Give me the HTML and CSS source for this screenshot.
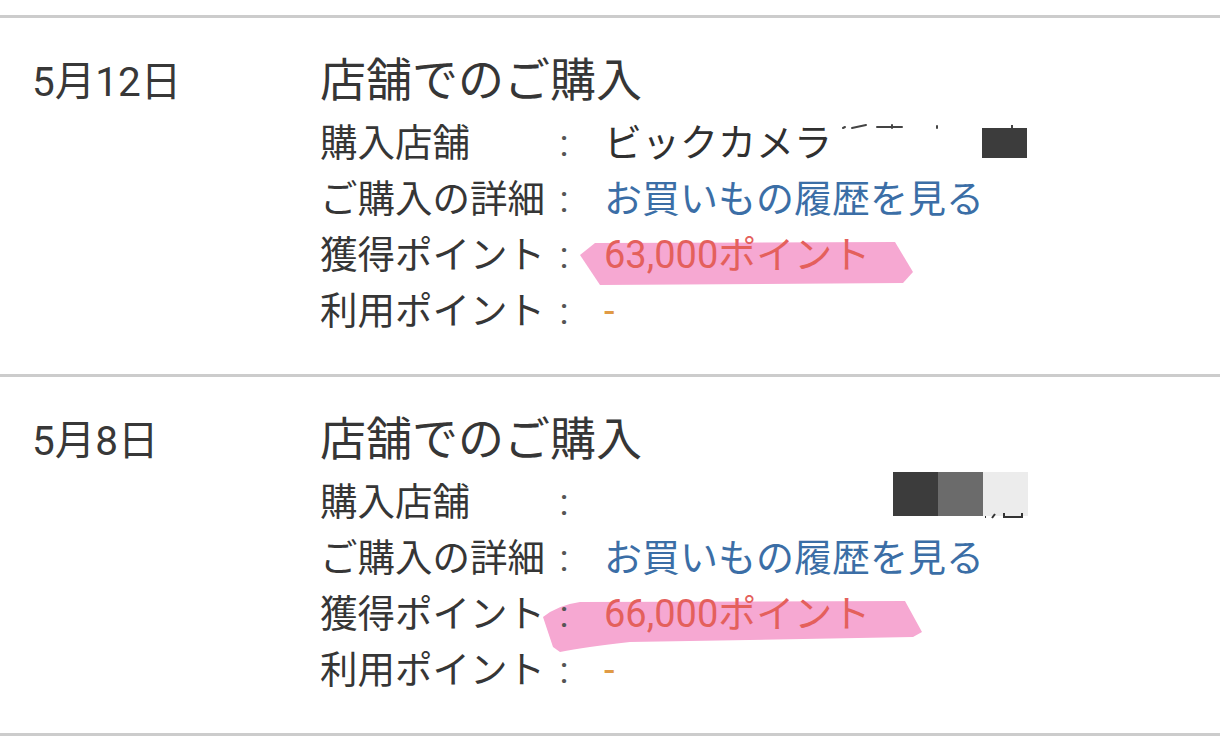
FILE: index.html
```html
<!DOCTYPE html>
<html lang="ja">
<head>
<meta charset="utf-8">
<title>ポイント履歴</title>
<link rel="stylesheet" href="styles.css">
</head>
<body>
<div class="page">
  <section class="entry">
    <div class="date">5月12日</div>
    <div class="main">
      <h2 class="title">店舗でのご購入</h2>
      <dl class="rows">
        <dt class="label">購入店舗</dt><dd class="colon">:</dd><dd class="val">ビックカメラ</dd>
        <dt class="label">ご購入の詳細</dt><dd class="colon">:</dd><dd class="val link">お買いもの履歴を見る</dd>
        <dt class="label">獲得ポイント</dt><dd class="colon">:</dd><dd class="val pts">63,000ポイント</dd>
        <dt class="label">利用ポイント</dt><dd class="colon">:</dd><dd class="val dash">-</dd>
      </dl>
    </div>
    <svg class="hl hl-a" width="390" height="70" viewBox="0 0 390 70"><polygon points="40,15 55,3 355,2 373,32 363,43 60,45" fill="#f6a8d2"/></svg>
    <svg class="frag frag-a" width="110" height="8" viewBox="0 0 110 8"><g stroke="#444" stroke-width="2" stroke-linecap="round"><line x1="3" y1="5" x2="5" y2="4"/><line x1="12" y1="5" x2="26" y2="2"/><line x1="37" y1="4" x2="62" y2="4"/><line x1="52" y1="2" x2="52" y2="5"/><line x1="97" y1="3" x2="97" y2="5"/></g></svg>
    <div class="redact redact-a"><span class="tick"></span></div>
  </section>
  <section class="entry">
    <div class="date">5月8日</div>
    <div class="main">
      <h2 class="title">店舗でのご購入</h2>
      <dl class="rows">
        <dt class="label">購入店舗</dt><dd class="colon">:</dd><dd class="val"></dd>
        <dt class="label">ご購入の詳細</dt><dd class="colon">:</dd><dd class="val link">お買いもの履歴を見る</dd>
        <dt class="label">獲得ポイント</dt><dd class="colon">:</dd><dd class="val pts">66,000ポイント</dd>
        <dt class="label">利用ポイント</dt><dd class="colon">:</dd><dd class="val dash">-</dd>
      </dl>
    </div>
    <svg class="hl hl-b" width="390" height="70" viewBox="0 0 390 70"><path d="M3,22 Q18,10 40,7 L365,6 L382,37 L373,42 L90,47 Q45,52 20,57 L13,52 Z" fill="#f6a8d2"/></svg>
    <div class="redact redact-b"><span class="blk dark"></span><span class="blk mid"></span><span class="blk light"></span></div>
    <svg class="frag frag-b" width="44" height="8" viewBox="0 0 44 8"><g stroke="#333" stroke-width="2"><line x1="3" y1="6" x2="4" y2="6"/><line x1="10" y1="7" x2="13" y2="3"/><line x1="22" y1="6" x2="40" y2="6"/><line x1="22" y1="2" x2="22" y2="7"/><line x1="40" y1="2" x2="40" y2="7"/></g></svg>
  </section>
</div>
</body>
</html>
```
FILE: styles.css
```css
* { box-sizing: border-box; }
html, body { margin: 0; padding: 0; background: #ffffff; }
body {
  font-family: Roboto, "Noto Sans CJK JP", sans-serif;
  color: #363636;
  width: 1220px;
  height: 738px;
  overflow: hidden;
}
.page { padding-top: 15px; }
.entry {
  position: relative;
  display: flex;
  align-items: baseline;
  height: 359px;
  border-top: 3px solid #cccccc;
  padding: 32px 0 0 32px;
}
.entry:last-child { border-bottom: 3px solid #cccccc; height: 362px; }
.date {
  width: 288px;
  flex: none;
  font-size: 40.5px;
  line-height: 60px;
  color: #383838;
}
.main { flex: 1; }
.title {
  margin: 0 0 5px;
  font-size: 46px;
  font-weight: 400;
  line-height: 60px;
  color: #363636;
}
.rows {
  position: relative;
  z-index: 1;
  margin: 0;
  display: grid;
  grid-template-columns: 225px 38px 1fr;
  grid-auto-rows: 56px;
  align-items: center;
  font-size: 37.5px;
  line-height: 56px;
}
.rows dt, .rows dd { margin: 0; white-space: nowrap; }
.label { color: #363636; }
.colon { text-align: center; color: #555555; }
.val { padding-left: 21px; color: #303030; font-size: 38px; }
.link { color: #3b6ea6; }
.pts { color: #e4605c; }
.dash { color: #e09a45; }
.hl { position: absolute; z-index: 0; }
.hl-a { left: 540px; top: 222px; }
.hl-b { left: 540px; top: 218px; }
.redact { position: absolute; display: flex; }
.redact-a { left: 982px; top: 110px; width: 45px; height: 30px; background: #3c3c3c; }
.tick { position: absolute; left: 29px; top: -3px; width: 2px; height: 3px; background: #444; }
.redact-b { left: 893px; top: 95px; height: 44px; }
.blk { width: 45px; height: 44px; }
.dark { background: #3c3c3c; }
.mid { background: #6b6b6b; }
.light { background: #ececec; }
.frag { position: absolute; }
.frag-a { left: 840px; top: 105px; }
.frag-b { left: 982px; top: 134px; }
```
